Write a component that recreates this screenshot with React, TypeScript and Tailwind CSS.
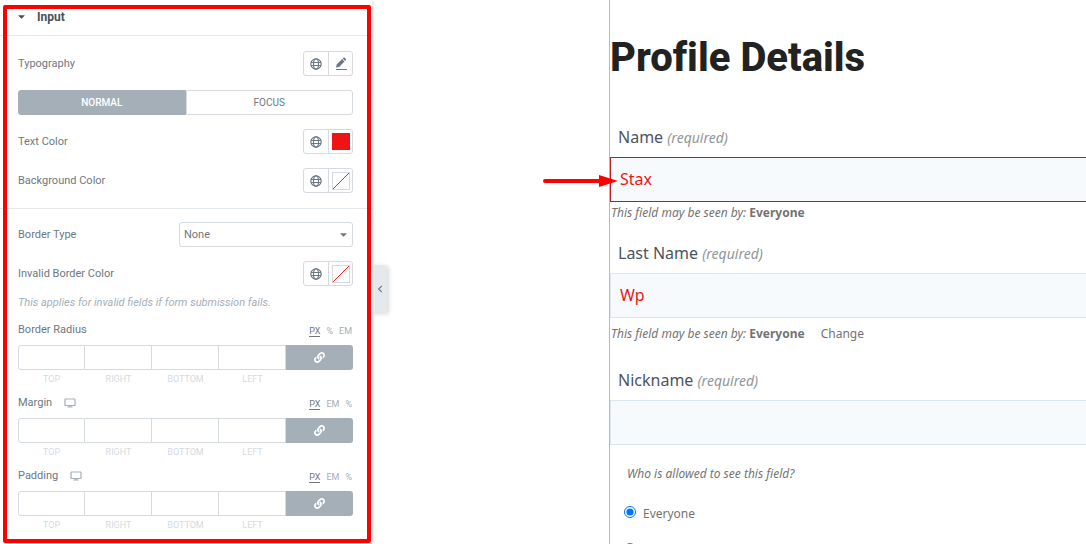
import { useState } from "react";
import type { ReactNode } from "react";
import { FaCaretDown, FaChevronLeft, FaLink } from "react-icons/fa";

const SIDES = ["Top", "Right", "Bottom", "Left"];

function GlobeIcon() {
  return (
    <svg viewBox="0 0 12 12" className="size-3" fill="none" stroke="currentColor" aria-hidden="true">
      <circle cx="6" cy="6" r="5.2" strokeWidth="1.2" />
      <ellipse cx="6" cy="6" rx="2.5" ry="5.2" strokeWidth="1.1" />
      <path d="M1 4.5h10M1 7.5h10" strokeWidth="1.1" />
    </svg>
  );
}

function PencilIcon() {
  return (
    <svg viewBox="0 0 12 13" className="h-[13px] w-3" fill="currentColor" aria-hidden="true">
      <path d="M1 10.5l.7-3 5.4-5.4 2.4 2.4-5.4 5.4z" />
      <path d="M7.7 1.5l.8-.8c.3-.3.8-.3 1.1 0l1.300 1.300c.3.3.3.8 0 1.100l-.8.8z" />
      <path d="M1 12h11v1H1z" />
    </svg>
  );
}

function DesktopIcon() {
  return (
    <svg viewBox="0 0 12 10" className="h-[10px] w-3" fill="none" stroke="currentColor" aria-hidden="true">
      <rect x="1" y="1" width="10" height="6.5" rx="0.6" strokeWidth="1.2" />
      <path d="M3.5 9h5M4.5 8.2h3" />
    </svg>
  );
}

function ControlRow({ label, children }: { label: string; children: ReactNode }) {
  return (
    <div className="flex h-[25px] items-center justify-between">
      <span>{label}</span>
      {children}
    </div>
  );
}

function PickerButtons({ name, children }: { name: string; children: ReactNode }) {
  return (
    <div className="flex h-[25px] w-[50px] rounded-[3px] border border-[#d5dadf]">
      <button
        type="button"
        aria-label={`${name} global`}
        className="flex w-[25px] shrink-0 items-center justify-center border-r border-[#d5dadf]"
      >
        <GlobeIcon />
      </button>
      <button type="button" aria-label={name} className="flex flex-1 items-center justify-center pl-px">
        {children}
      </button>
    </div>
  );
}

function EmptySwatch() {
  return (
    <span className="size-[18px] border border-[#d5dadf]">
      <svg viewBox="0 0 16 16" className="size-4" aria-hidden="true">
        <path d="M0 16l16-16" stroke="#ff1a1a" />
      </svg>
    </span>
  );
}

function Dimensions({ label, units, responsive = false }: { label: string; units: string[]; responsive?: boolean }) {
  return (
    <fieldset>
      <div className="flex h-4 items-center justify-between">
        <div className="flex items-center gap-3">
          <span>{label}</span>
          {responsive && (
            <button type="button" aria-label={`${label} device`} className="text-[#a4afb7]">
              <DesktopIcon />
            </button>
          )}
        </div>
        <div className="flex gap-[6px] pt-1 pr-px text-[9px] leading-[9px] text-[#a4afb7]">
          {units.map((unit, i) => (
            <button
              key={unit}
              type="button"
              className={i === 0 ? "border-b border-[#6d7882] text-[#6d7882]" : "border-b border-transparent"}
            >
              {unit}
            </button>
          ))}
        </div>
      </div>
      <div className="mt-[7px] grid grid-cols-5">
        {SIDES.map((side) => (
          <label key={side} className="flex flex-col gap-[3px] text-center text-[9px] leading-3 text-[#d5dadf] uppercase">
            <input
              type="text"
              aria-label={`${label} ${side}`}
              className={
                side === "Top"
                  ? "h-[25px] w-full rounded-l-[3px] border border-[#d5dadf]"
                  : "h-[25px] w-full border-y border-r border-[#d5dadf]"
              }
            />
            {side}
          </label>
        ))}
        <button
          type="button"
          aria-label={`Link ${label} values`}
          className="flex h-[25px] items-center justify-center rounded-r-[3px] bg-[#a4afb7] text-white"
        >
          <FaLink className="size-[11px]" />
        </button>
      </div>
    </fieldset>
  );
}

function Panel() {
  const [tab, setTab] = useState("Normal");

  return (
    <aside className="relative w-[372px] shrink-0 bg-white font-['Roboto',sans-serif] text-[11px] leading-4 text-[#6d7882] shadow-[1px_0_4px_rgba(0,0,0,0.15)]">
      <button
        type="button"
        className="flex h-9 w-full items-center gap-[10px] border-b border-[#e6e9ec] pb-0.5 pl-4 text-xs font-bold text-[#495157]"
      >
        <FaCaretDown className="size-[11px]" />
        Input
      </button>

      <div className="flex flex-col gap-[14px] border-b border-[#e6e9ec] py-[15px] pr-[19px] pl-[18px]">
        <ControlRow label="Typography">
          <PickerButtons name="Typography">
            <PencilIcon />
          </PickerButtons>
        </ControlRow>

        <div className="flex h-[25px] text-[10px]">
          {["Normal", "Focus"].map((name) => (
            <button
              key={name}
              type="button"
              onClick={() => setTab(name)}
              className={
                tab === name
                  ? "flex-1 border border-[#a4afb7] bg-[#a4afb7] font-medium text-white uppercase first:rounded-l-[3px] last:rounded-r-[3px]"
                  : "flex-1 border border-[#d5dadf] uppercase first:rounded-l-[3px] last:rounded-r-[3px]"
              }
            >
              {name}
            </button>
          ))}
        </div>

        <ControlRow label="Text Color">
          <PickerButtons name="Text Color">
            <span className="h-[17px] w-[18px] bg-[#ee1414]" />
          </PickerButtons>
        </ControlRow>
        <ControlRow label="Background Color">
          <PickerButtons name="Background Color">
            <EmptySwatch />
          </PickerButtons>
        </ControlRow>
      </div>

      <div className="pt-[13px] pr-[19px] pl-[18px]">
        <div className="flex flex-col gap-[14px]">
          <div className="flex h-[25px] items-center justify-between">
            <label htmlFor="border-type">Border Type</label>
            <div className="relative">
              <select
                id="border-type"
                className="h-[25px] w-[174px] appearance-none rounded-[3px] border border-[#d5dadf] bg-white px-1"
              >
                <option>None</option>
                <option>Solid</option>
                <option>Double</option>
                <option>Dotted</option>
                <option>Dashed</option>
              </select>
              <FaCaretDown className="pointer-events-none absolute top-[7px] right-1 size-[11px]" />
            </div>
          </div>
          <ControlRow label="Invalid Border Color">
            <PickerButtons name="Invalid Border Color">
              <EmptySwatch />
            </PickerButtons>
          </ControlRow>
        </div>
        <p className="mt-[9px] mb-[11px] text-[11px] leading-4 text-[#a4afb7] italic">
          This applies for invalid fields if form submission fails.
        </p>
        <div className="flex flex-col gap-[10px]">
          <Dimensions label="Border Radius" units={["PX", "%", "EM"]} />
          <Dimensions label="Margin" units={["PX", "EM", "%"]} responsive />
          <Dimensions label="Padding" units={["PX", "EM", "%"]} responsive />
        </div>
      </div>

      {/* collapse handle */}
      <button
        type="button"
        aria-label="Hide panel"
        className="absolute top-[265px] left-full flex h-12 w-[15px] items-center justify-center rounded-r-[3px] bg-[#e6e9ec] text-[#6d7882] shadow-[2px_1px_4px_rgba(0,0,0,0.15)]"
      >
        <FaChevronLeft className="size-2" />
      </button>

      {/* highlight frame */}
      <div className="pointer-events-none absolute top-[5px] right-px bottom-px left-[3px] rounded-[2px] border-4 border-[#ff0000]" />
    </aside>
  );
}

function Label({ id, children }: { id: string; children: ReactNode }) {
  return (
    <label htmlFor={id} className="block pl-2 text-base leading-6 text-[#4d535f]">
      {children} <i className="text-sm leading-none text-[#939597]">(required)</i>
    </label>
  );
}

const fieldClass =
  "block h-[45px] w-full border border-r-0 bg-[#f7fafd] px-[9px] pb-0.5 text-base text-[#ee1414] outline-none";

function ProfileForm() {
  return (
    <main className="relative min-w-0 flex-1 pl-[237px]">
      <form className="h-full border-l border-[#7fd0ee] pt-[34px] font-['Noto_Sans',sans-serif] text-xs leading-5 text-[#737373]">
        <h1 className="mb-[43px] font-['Roboto',sans-serif] text-[40px] leading-12 font-extrabold whitespace-nowrap text-[#222] [font-variant-ligatures:none]">
          Profile Details
        </h1>

        <Label id="name">Name</Label>
        <div className="relative mt-2">
          <input id="name" defaultValue="Stax" className={`${fieldClass} border-[#b71c1c]`} />
          <svg
            viewBox="0 0 76 14"
            className="absolute top-4 -left-[68px] h-[14px] w-[76px]"
            fill="#ff0000"
            aria-hidden="true"
          >
            <rect x="1" y="6" width="60" height="4" rx="2" />
            <path d="M57 2l19 6-19 6z" />
          </svg>
        </div>
        <p className="mt-px mb-[18px] pl-px">
          <i>This field may be seen by:</i> <b>Everyone</b>
        </p>

        <Label id="last-name">Last Name</Label>
        <input id="last-name" defaultValue="Wp" className={`${fieldClass} mt-2 border-[#dbe6ee]`} />
        <p className="mt-[6px] mb-6 pl-px">
          <i>This field may be seen by:</i> <b>Everyone</b>
          <button type="button" className="ml-4">
            Change
          </button>
        </p>

        <Label id="nickname">Nickname</Label>
        <input id="nickname" className={`${fieldClass} mt-2 border-[#dbe6ee]`} />

        <fieldset className="mt-[19px] pl-[14px]">
          <legend className="pl-[3px] italic">Who is allowed to see this field?</legend>
          <div className="mt-5 flex flex-col gap-[17px]">
            <label className="flex gap-[7px]">
              <input type="radio" name="visibility" defaultChecked className="mt-0.5 size-3" />
              Everyone
            </label>
            <input type="radio" name="visibility" aria-label="Only me" className="mt-0.5 size-3" />
          </div>
        </fieldset>
      </form>
    </main>
  );
}

export default function App() {
  return (
    <div className="flex h-screen overflow-hidden bg-white">
      <div className="relative z-10 flex shrink-0">
        <Panel />
      </div>
      <ProfileForm />
    </div>
  );
}
